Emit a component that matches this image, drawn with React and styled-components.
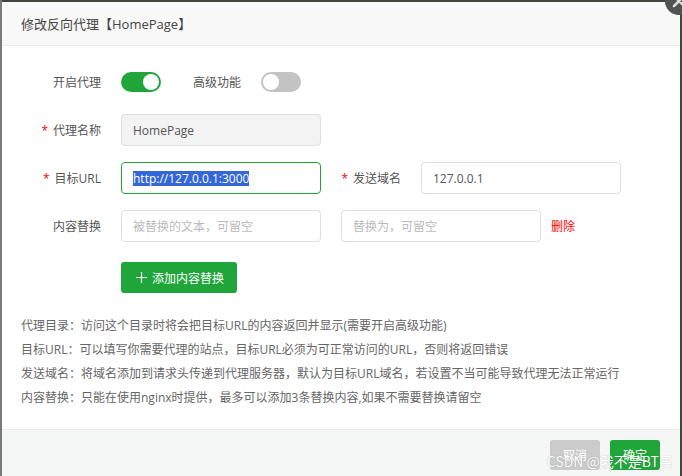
import React from "react"
import styled, { createGlobalStyle } from "styled-components"

const GlobalStyle = createGlobalStyle`
  html, body {
    margin: 0;
    padding: 0;
    height: 100%;
    overflow: hidden;
    background: #6e6e6e;
  }
  body {
    font-family: "Open Sans", "Noto Sans CJK SC", sans-serif;
  }
`

const Layer = styled.div`
  position: relative;
  height: 476px;
  padding: 2px 2px 0 2px;
  box-sizing: border-box;
  overflow: hidden;
  background: linear-gradient(to right, #7a7a7a 0, #7a7a7a 2px, transparent 2px), #3c463e;
`

const Dialog = styled.div`
  background: #fff;
  height: 520px;
  display: flex;
  flex-direction: column;
`

const Header = styled.div`
  height: 43px;
  flex-shrink: 0;
  background: #f8f8f8;
  border-bottom: 1px solid #ebebeb;
  display: flex;
  align-items: center;
  padding-left: 19px;
  font-size: 13px;
  color: #444;
`

const Body = styled.div`
  padding-top: 20px;
  height: 383px;
  flex-shrink: 0;
  box-sizing: border-box;
`

const Row = styled.div`
  display: flex;
  align-items: center;
  height: 32px;
  margin-bottom: 16px;
  font-size: 12px;
`

const Label = styled.div`
  width: ${p => p.$w || 99}px;
  flex-shrink: 0;
  margin-right: 20px;
  text-align: right;
  color: #555;
  font-size: 12px;
`

const Star = styled.span`
  color: #ef0808;
  margin-right: 5px;
`

const Switch = styled.div`
  width: 40px;
  height: 20px;
  border-radius: 10px;
  box-sizing: border-box;
  background: ${p => (p.$on ? "#20a53a" : "#c3c3c3")};
  position: relative;
  flex-shrink: 0;
  &::after {
    content: "";
    position: absolute;
    top: 2px;
    left: ${p => (p.$on ? "22px" : "2px")};
    width: 16px;
    height: 16px;
    border-radius: 50%;
    background: #fff;
  }
`

const Field = styled.div`
  width: 200px;
  height: 32px;
  box-sizing: border-box;
  border: 1px solid ${p => (p.$focus ? "#20a53a" : "#dcdfe6")};
  border-radius: 4px;
  background: ${p => (p.$disabled ? "#f3f3f3" : "#fff")};
  display: flex;
  align-items: center;
  padding-left: 11px;
  margin-right: ${p => p.$mr || 0}px;
  color: ${p => (p.$placeholder ? "#bbb" : "#555")};
  font-size: 12px;
  flex-shrink: 0;
`

const Selected = styled.span`
  background: #3367d6;
  color: #fff;
  line-height: 15px;
`

const Delete = styled.span`
  margin-left: 10px;
  color: #f00;
  font-size: 12px;
`

const AddButton = styled.button`
  margin: 20px 0 0 119px;
  height: 31px;
  padding: 0 13px 0 15px;
  border: none;
  border-radius: 3px;
  background: #20a53a;
  color: #fff;
  font-family: inherit;
  font-size: 12px;
  display: flex;
  align-items: center;
  gap: 5px;
`

const Help = styled.div`
  margin-top: 21px;
  padding-left: 19px;
  font-size: 12px;
  line-height: 24px;
  color: #666;
`

const Footer = styled.div`
  border-top: 1px solid #ebebeb;
  background: #f5f7f7;
  flex: 1;
  display: flex;
  justify-content: flex-end;
  align-items: flex-start;
  padding: 10px 20px 0 0;
  gap: 10px;
`

const FootButton = styled.button`
  width: 50px;
  height: 30px;
  border: none;
  border-radius: 3px;
  background: ${p => (p.$primary ? "#20a53a" : "#cbcbcb")};
  color: #fff;
  font-family: inherit;
  font-size: 12px;
`

const Close = styled.svg`
  position: absolute;
  top: -14px;
  right: -12px;
`

const Watermark = styled.div`
  position: absolute;
  right: 9px;
  bottom: 7px;
  font-family: "Noto Sans CJK SC", sans-serif;
  font-size: 14px;
  line-height: 16px;
  color: #fff;
  text-shadow: 0 0 1px rgba(0, 0, 0, 0.3);
  white-space: nowrap;
`

const tips = [
  "代理目录：访问这个目录时将会把目标URL的内容返回并显示(需要开启高级功能)",
  "目标URL：可以填写你需要代理的站点，目标URL必须为可正常访问的URL，否则将返回错误",
  "发送域名：将域名添加到请求头传递到代理服务器，默认为目标URL域名，若设置不当可能导致代理无法正常运行",
  "内容替换：只能在使用nginx时提供，最多可以添加3条替换内容,如果不需要替换请留空",
]

export default function App() {
  return (
    <>
      <GlobalStyle />
      <Layer>
        <Dialog>
          <Header>修改反向代理【HomePage】</Header>
          <Body>
            <Row>
              <Label>开启代理</Label>
              <Switch $on />
              <Label $w={80}>高级功能</Label>
              <Switch />
            </Row>
            <Row>
              <Label><Star>*</Star>代理名称</Label>
              <Field $disabled>HomePage</Field>
            </Row>
            <Row>
              <Label><Star>*</Star>目标URL</Label>
              <Field $focus><Selected>http://127.0.0.1:3000</Selected></Field>
              <Label $w={80}><Star>*</Star>发送域名</Label>
              <Field>127.0.0.1</Field>
            </Row>
            <Row>
              <Label>内容替换</Label>
              <Field $placeholder $mr={20}>被替换的文本，可留空</Field>
              <Field $placeholder>替换为，可留空</Field>
              <Delete>删除</Delete>
            </Row>
            <AddButton>
              <svg width="11" height="11" viewBox="0 0 11 11">
                <path d="M5.5 0v11M0 5.5h11" stroke="#fff" strokeWidth="1.2" />
              </svg>
              添加内容替换
            </AddButton>
            <Help>
              {tips.map(t => <div key={t}>{t}</div>)}
            </Help>
          </Body>
          <Footer>
            <FootButton>取消</FootButton>
            <FootButton $primary>确定</FootButton>
          </Footer>
        </Dialog>
        <Close width="30" height="30" viewBox="0 0 30 30">
          <circle cx="15" cy="15" r="14" fill="#525252" />
          <path d="M10 10l10 10M20 10l-10 10" stroke="#ddd" strokeWidth="2.5" strokeLinecap="round" />
        </Close>
        <Watermark>CSDN @我不是BT男</Watermark>
      </Layer>
    </>
  )
}
